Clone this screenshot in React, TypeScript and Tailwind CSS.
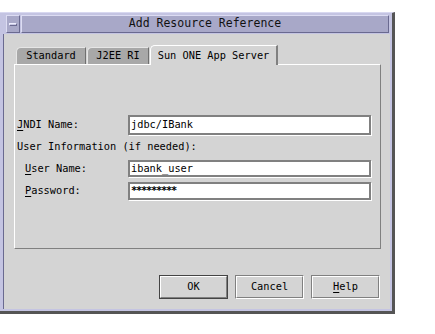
import { ReactNode } from "react";

function U({ children }: { children: ReactNode }) {
  return <span className="underline underline-offset-2">{children}</span>;
}

function Tab({ label, active, width }: { label: string; active?: boolean; width: string }) {
  if (active) {
    return (
      <div
        className={`${width} h-[20px] -mb-px relative z-10 flex items-center justify-center bg-[#d4d4d4] border-t border-l border-white border-r-2 border-r-[#808080] rounded-tl-[5px]`}
      >
        {label}
      </div>
    );
  }
  return (
    <div
      className={`${width} h-[17px] flex items-center justify-center bg-[#a8a8a8] border-t border-l border-[#e6e6e6] border-r border-r-[#707070] rounded-tl-[5px]`}
    >
      {label}
    </div>
  );
}

function Field({ children, h }: { children: ReactNode; h: string }) {
  return (
    <div className={`w-[243px] ${h} bg-white border-2 border-[#808080] flex items-center pl-[1px] shadow-[1px_1px_0_#ffffff]`}>
      {children}
    </div>
  );
}

function Button({ children, isDefault }: { children: ReactNode; isDefault?: boolean }) {
  return (
    <div
      className={`w-[69px] h-[24px] ${
        isDefault ? "border border-[#444]" : "border border-t-[#808080] border-l-[#808080] border-r-white border-b-white"
      }`}
    >
      <div className="w-full h-full flex items-center justify-center border border-t-white border-l-white border-r-[#808080] border-b-[#808080]">
        {children}
      </div>
    </div>
  );
}

export default function App() {
  return (
    <div
      className="w-[435px] h-[334px] bg-white pt-[12px] text-[10.3px] text-black"
      style={{ fontFamily: '"DejaVu Sans Mono", "Liberation Mono", monospace' }}
    >
      {/* window frame */}
      <div className="w-[395px] h-[302px] flex flex-col bg-[#c4c4e2] border-t border-t-[#d8d8f0] border-r-[3px] border-b-[3px] border-r-[#555] border-b-[#555] p-[2px] pl-[3px]">
        {/* title bar */}
        <div className="h-[18px] flex ml-[3px] mr-[1px] gap-[1px]">
          <div className="w-[14px] h-full bg-[#a8a8c8] border border-t-[#dcdcf2] border-l-[#dcdcf2] border-r-[#6a6a90] border-b-[#6a6a90] flex items-center justify-center">
            <div className="w-[8px] h-[3px] bg-[#c8c8e4] border border-t-[#eeeeff] border-l-[#eeeeff] border-r-[#6a6a90] border-b-[#6a6a90]" />
          </div>
          <div className="flex-1 h-full bg-[#a8a8c8] border border-t-[#dcdcf2] border-l-[#dcdcf2] border-r-[#6a6a90] border-b-[#6a6a90] flex items-center justify-center text-[11.5px] text-[#111]">
            Add Resource Reference
          </div>
        </div>

        {/* body */}
        <div className="flex-1 mt-[1px] bg-[#d4d4d4] border-l border-l-[#6a6a90] flex flex-col pt-[11px] pl-[10px] pr-[9px] pb-[10px]">
          {/* tabs */}
          <div className="flex items-end h-[19px] pl-[2px] gap-[1px]">
            <Tab label="Standard" width="w-[70px]" />
            <Tab label="J2EE RI" width="w-[62px]" />
            <Tab label="Sun ONE App Server" width="w-[128px]" active />
          </div>
          {/* panel */}
          <div className="h-[185px] border-t border-l border-white border-r border-b border-r-[#808080] border-b-[#808080] flex flex-col pl-[2px] pt-[50px]">
            <div className="flex items-center h-[20px]">
              <div className="w-[111px]">
                <U>J</U>NDI Name:
              </div>
              <Field h="h-[20px]">jdbc/IBank</Field>
            </div>
            <div className="mt-[6px] h-[12px] flex items-center">User Information (if needed):</div>
            <div className="flex items-center h-[17px] mt-[7px]">
              <div className="w-[111px] pl-[8px]">
                <U>U</U>ser Name:
              </div>
              <Field h="h-[17px]">ibank_user</Field>
            </div>
            <div className="flex items-center h-[18px] mt-[5px]">
              <div className="w-[111px] pl-[8px]">
                <U>P</U>assword:
              </div>
              <Field h="h-[18px]">
                <span className="font-bold tracking-[-1.2px]">*********</span>
              </Field>
            </div>
          </div>
          {/* buttons */}
          <div className="flex-1 flex items-end justify-end gap-[7px] pr-[1px]">
            <Button isDefault>OK</Button>
            <Button>Cancel</Button>
            <Button>
              <span>
                <U>H</U>elp
              </span>
            </Button>
          </div>
        </div>
      </div>
    </div>
  );
}
